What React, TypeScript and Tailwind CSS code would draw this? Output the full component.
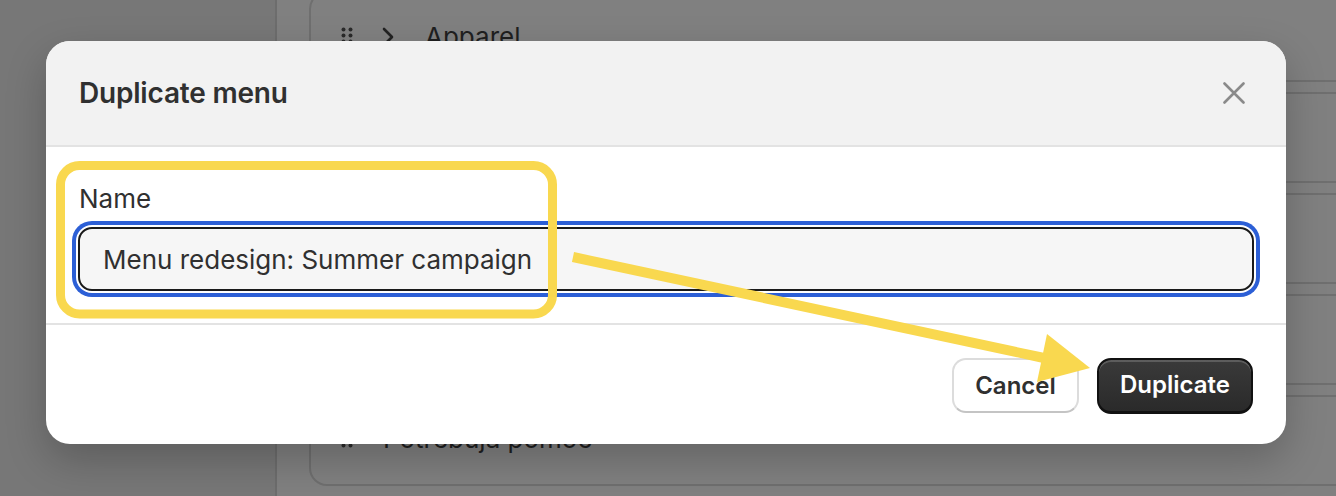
import React from "react";

function DragDots() {
  return (
    <svg width="12" height="20" viewBox="0 0 12 20" className="shrink-0">
      {[2, 8, 14].map((y) => (
        <g key={y}>
          <circle cx="2.5" cy={y + 0.5} r="2" fill="#2a2a2a" />
          <circle cx="9.5" cy={y + 0.5} r="2" fill="#2a2a2a" />
        </g>
      ))}
    </svg>
  );
}

function Chevron() {
  return (
    <svg width="14" height="20" viewBox="0 0 14 20" className="shrink-0">
      <path d="M3 2 L11 10 L3 18" fill="none" stroke="#222" strokeWidth="2.6" strokeLinecap="round" strokeLinejoin="round" />
    </svg>
  );
}

function Row({ label, chevron }: { label?: string; chevron?: boolean }) {
  return (
    <div className="h-[91px] w-[1100px] shrink-0 rounded-[18px] border-2 border-[#6f6f6f] flex items-center pl-[30px]">
      <DragDots />
      {chevron ? (
        <>
          <div className="ml-[28px]"><Chevron /></div>
          <span className="ml-[30px] text-[26px] text-[#1f1f1f]">{label}</span>
        </>
      ) : (
        <span className="ml-[30px] -mt-[4px] text-[26px] text-[#1f1f1f]">{label}</span>
      )}
    </div>
  );
}

export default function App() {
  return (
    <div
      className="relative w-[1336px] h-[496px] overflow-hidden bg-[#808080]"
      style={{ fontFamily: "Inter, 'Noto Sans', sans-serif" }}
    >
      {/* background page */}
      <div className="flex h-full">
        <div className="w-[277px] h-full shrink-0 bg-[#777777] border-r-2 border-[#6d6d6d]" />
        <div className="flex-1 pl-[32px]">
          <div className="-mt-[9px] flex flex-col gap-[10px]">
            <Row label="Apparel" chevron />
            <Row />
            <Row />
            <Row />
            <Row label="Potrebuja pomoč" />
            <Row />
          </div>
        </div>
      </div>

      {/* modal */}
      <div className="absolute left-[46px] top-[41px] w-[1240px] h-[403px] rounded-[24px] overflow-hidden bg-white shadow-[0_16px_40px_rgba(0,0,0,0.22)] flex flex-col">
        <div className="h-[106px] shrink-0 bg-[#f2f2f2] border-b-2 border-[#e3e3e3] flex items-center justify-between pl-[33px] pr-[41px]">
          <h2 className="text-[28px] font-semibold text-[#303030] tracking-[-0.2px]">Duplicate menu</h2>
          <svg width="22" height="22" viewBox="0 0 22 22">
            <path d="M1.5 1.5 L20.5 20.5 M20.5 1.5 L1.5 20.5" stroke="#8a8a8a" strokeWidth="2.6" strokeLinecap="round" />
          </svg>
        </div>
        <div className="h-[178px] shrink-0 border-b-2 border-[#e3e3e3] pt-[34px] px-[32px]">
          <div className="text-[26px] leading-[36px] text-[#303030] pl-[1px]">Name</div>
          <div className="mt-[10px] h-[64px] rounded-[14px] border-2 border-[#1a1a1a] bg-[#f6f6f6] shadow-[0_0_0_2px_#ffffff,0_0_0_6px_#2c5fd6] flex items-center pl-[23px] text-[26px] text-[#303030]">
            Menu redesign: Summer campaign
          </div>
        </div>
        <div className="flex-1 flex items-center justify-end gap-[18px] pr-[33px] pt-[2px]">
          <button className="w-[127px] h-[55px] rounded-[14px] bg-white border-2 border-[#dcdcdc] border-b-[#c4c4c4] text-[24px] font-semibold text-[#303030]">
            Cancel
          </button>
          <button className="w-[156px] h-[56px] rounded-[14px] bg-gradient-to-b from-[#3a3a3a] to-[#2a2a2a] border-2 border-[#111111] border-b-[3px] shadow-[inset_0_2px_0_rgba(255,255,255,0.18)] text-[24px] font-semibold text-white">
            Duplicate
          </button>
        </div>
      </div>

      {/* annotations */}
      <svg className="absolute inset-0 pointer-events-none" width="1336" height="496" viewBox="0 0 1336 496">
        <rect x="60.5" y="165.5" width="492" height="148.5" rx="19" fill="none" stroke="#f9d84f" strokeWidth="9" />
        <line x1="573" y1="257" x2="1044" y2="358" stroke="#f9d84f" strokeWidth="10" />
        <polygon points="1047,334 1090,368 1037,382" fill="#f9d84f" />
      </svg>
    </div>
  );
}
